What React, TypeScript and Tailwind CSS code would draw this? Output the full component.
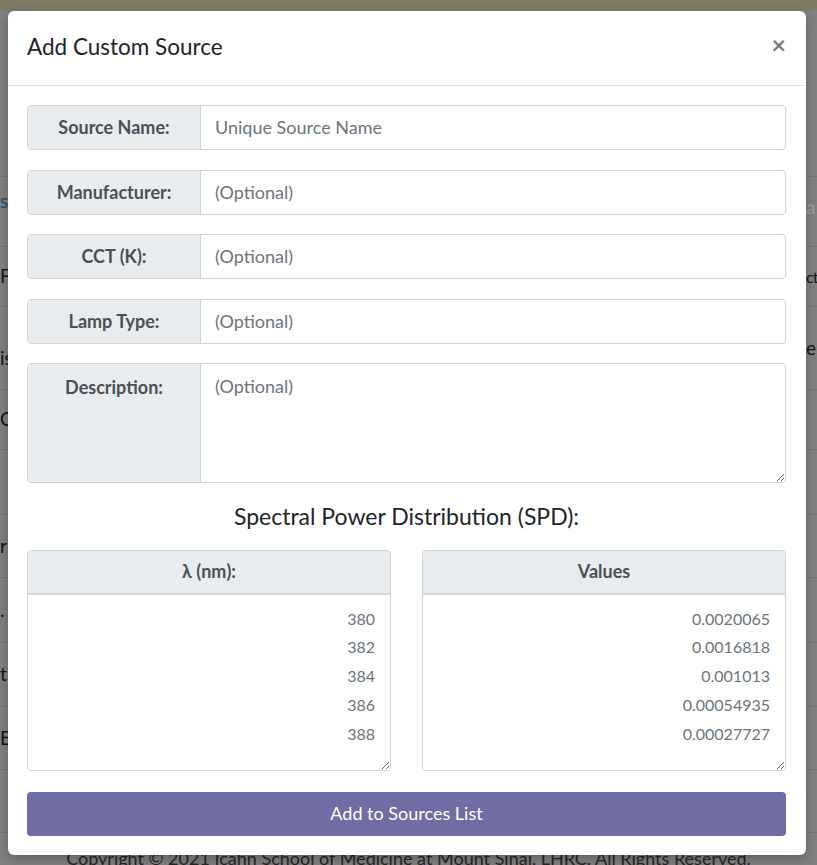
import React from 'react';

const fields = [
    { label: 'Source Name:', placeholder: 'Unique Source Name' },
    { label: 'Manufacturer:', placeholder: '(Optional)' },
    { label: 'CCT (K):', placeholder: '(Optional)' },
    { label: 'Lamp Type:', placeholder: '(Optional)' },
];

const wavelengths = ['380', '382', '384', '386', '388'];
const values = ['0.0020065', '0.0016818', '0.001013', '0.00054935', '0.00027727'];

// rows of the page lying behind the backdrop, only their edges show
const backRows = [
    { h: 'h-[70px]', left: 's', leftCls: 'text-[#1d4f7a] self-start pt-[10px]', right: 'a', rightCls: 'text-[#9a9a9a] font-bold self-start pt-[16px]' },
    { h: 'h-[60px]', left: 'F', leftCls: '', right: 'ct', rightCls: 'text-[16px]' },
    { h: 'h-[83px]', left: 'is', leftCls: 'self-start pt-[37px]', right: 'e', rightCls: 'self-start pt-[27px]' },
    { h: 'h-[60px]', left: 'Ca', leftCls: '', right: '', rightCls: '' },
    { h: 'h-[65px]', left: '', leftCls: '', right: '', rightCls: '' },
    { h: 'h-[63px]', left: 'r', leftCls: '', right: '', rightCls: '' },
    { h: 'h-[65px]', left: '.', leftCls: '', right: '', rightCls: '' },
    { h: 'h-[64px]', left: 't', leftCls: '', right: '', rightCls: '' },
    { h: 'h-[63px]', left: 'Er', leftCls: '', right: '', rightCls: '' },
    { h: 'h-[63px]', left: '', leftCls: '', right: '', rightCls: '' },
];

const SpdBox = ({ title, rows }: { title: string; rows: string[] }) => (
    <div className="flex flex-1 flex-col rounded-[4px] border border-[#ced4da] overflow-hidden">
        <div className="flex h-[44px] items-center justify-center bg-[#e9ecef] border-b-2 border-[#d3d8dd] text-[18px] font-bold text-[#495057]">
            {title}
        </div>
        <textarea
            readOnly
            defaultValue={rows.join('\n')}
            className="h-[175px] w-full bg-white pt-[10px] pr-[15px] text-right text-[16px] leading-[28.75px] text-[#6c757d] outline-none"
        />
    </div>
);

export default function App() {
    return (
        <div className="relative h-[865px] w-[817px] overflow-hidden bg-[#808080] font-['Lato',sans-serif]">
            {/* page behind the backdrop */}
            <div className="h-[10px] bg-[#7f7a66]" />
            <div className="h-[167px] border-b border-[#727272]" />
            {backRows.map((row, i) => (
                <div key={i} className={`flex items-center justify-between border-b border-[#727272] text-[19px] text-[#141414] ${row.h}`}>
                    <div className={`w-[8px] whitespace-nowrap ${row.leftCls}`}>{row.left}</div>
                    <div className={`w-[11px] whitespace-nowrap tracking-[-1px] ${row.rightCls}`}>{row.right}</div>
                </div>
            ))}
            <div className="pt-[12px] text-center text-[18px] text-[#262626]">
                Copyright © 2021 Icahn School of Medicine at Mount Sinai, LHRC. All Rights Reserved.
            </div>

            {/* modal */}
            <div className="absolute left-[8px] top-[11px] w-[798px] rounded-[6px] bg-white shadow-[0_4px_12px_rgba(0,0,0,0.25)]">
                <div className="flex h-[75px] items-center justify-between border-b border-[#dee2e6] pl-[19px] pr-[20px]">
                    <h5 className="text-[22.5px] text-[#212529] leading-none pb-[1px]">Add Custom Source</h5>
                    <span className="text-[25px] font-bold leading-none text-[#7b7b7b] pb-[7px]">×</span>
                </div>
                <div className="flex flex-col pl-[19px] pr-[20px] pt-[19px] pb-[19px]">
                    <div className="flex flex-col gap-[19.5px]">
                        {fields.map((f) => (
                            <div key={f.label} className="flex h-[45px] rounded-[4px] border border-[#ced4da] overflow-hidden">
                                <div className="flex w-[173px] items-center justify-center bg-[#e9ecef] border-r border-[#ced4da] text-[18px] font-bold text-[#495057]">
                                    {f.label}
                                </div>
                                <input
                                    placeholder={f.placeholder}
                                    className="flex-1 px-[14px] text-[18px] text-[#495057] outline-none placeholder:text-[#6c757d]"
                                />
                            </div>
                        ))}
                        <div className="flex h-[120px] rounded-[4px] border border-[#ced4da] overflow-hidden">
                            <div className="flex w-[173px] justify-center bg-[#e9ecef] border-r border-[#ced4da] pt-[10px] text-[18px] font-bold text-[#495057]">
                                Description:
                            </div>
                            <textarea
                                placeholder="(Optional)"
                                className="flex-1 px-[14px] py-[9px] text-[18px] leading-[1.5] text-[#495057] outline-none placeholder:text-[#6c757d]"
                            />
                        </div>
                    </div>
                    <h5 className="mt-[20px] text-center text-[23px] leading-[1.2] text-[#212529]">
                        Spectral Power Distribution (SPD):
                    </h5>
                    <div className="mt-[19px] flex gap-[31px]">
                        <SpdBox title="λ (nm):" rows={wavelengths} />
                        <SpdBox title="Values" rows={values} />
                    </div>
                    <button className="mt-[21px] h-[44px] rounded-[4px] bg-[#706ca4] text-[18px] text-white">
                        Add to Sources List
                    </button>
                </div>
            </div>
        </div>
    );
}
